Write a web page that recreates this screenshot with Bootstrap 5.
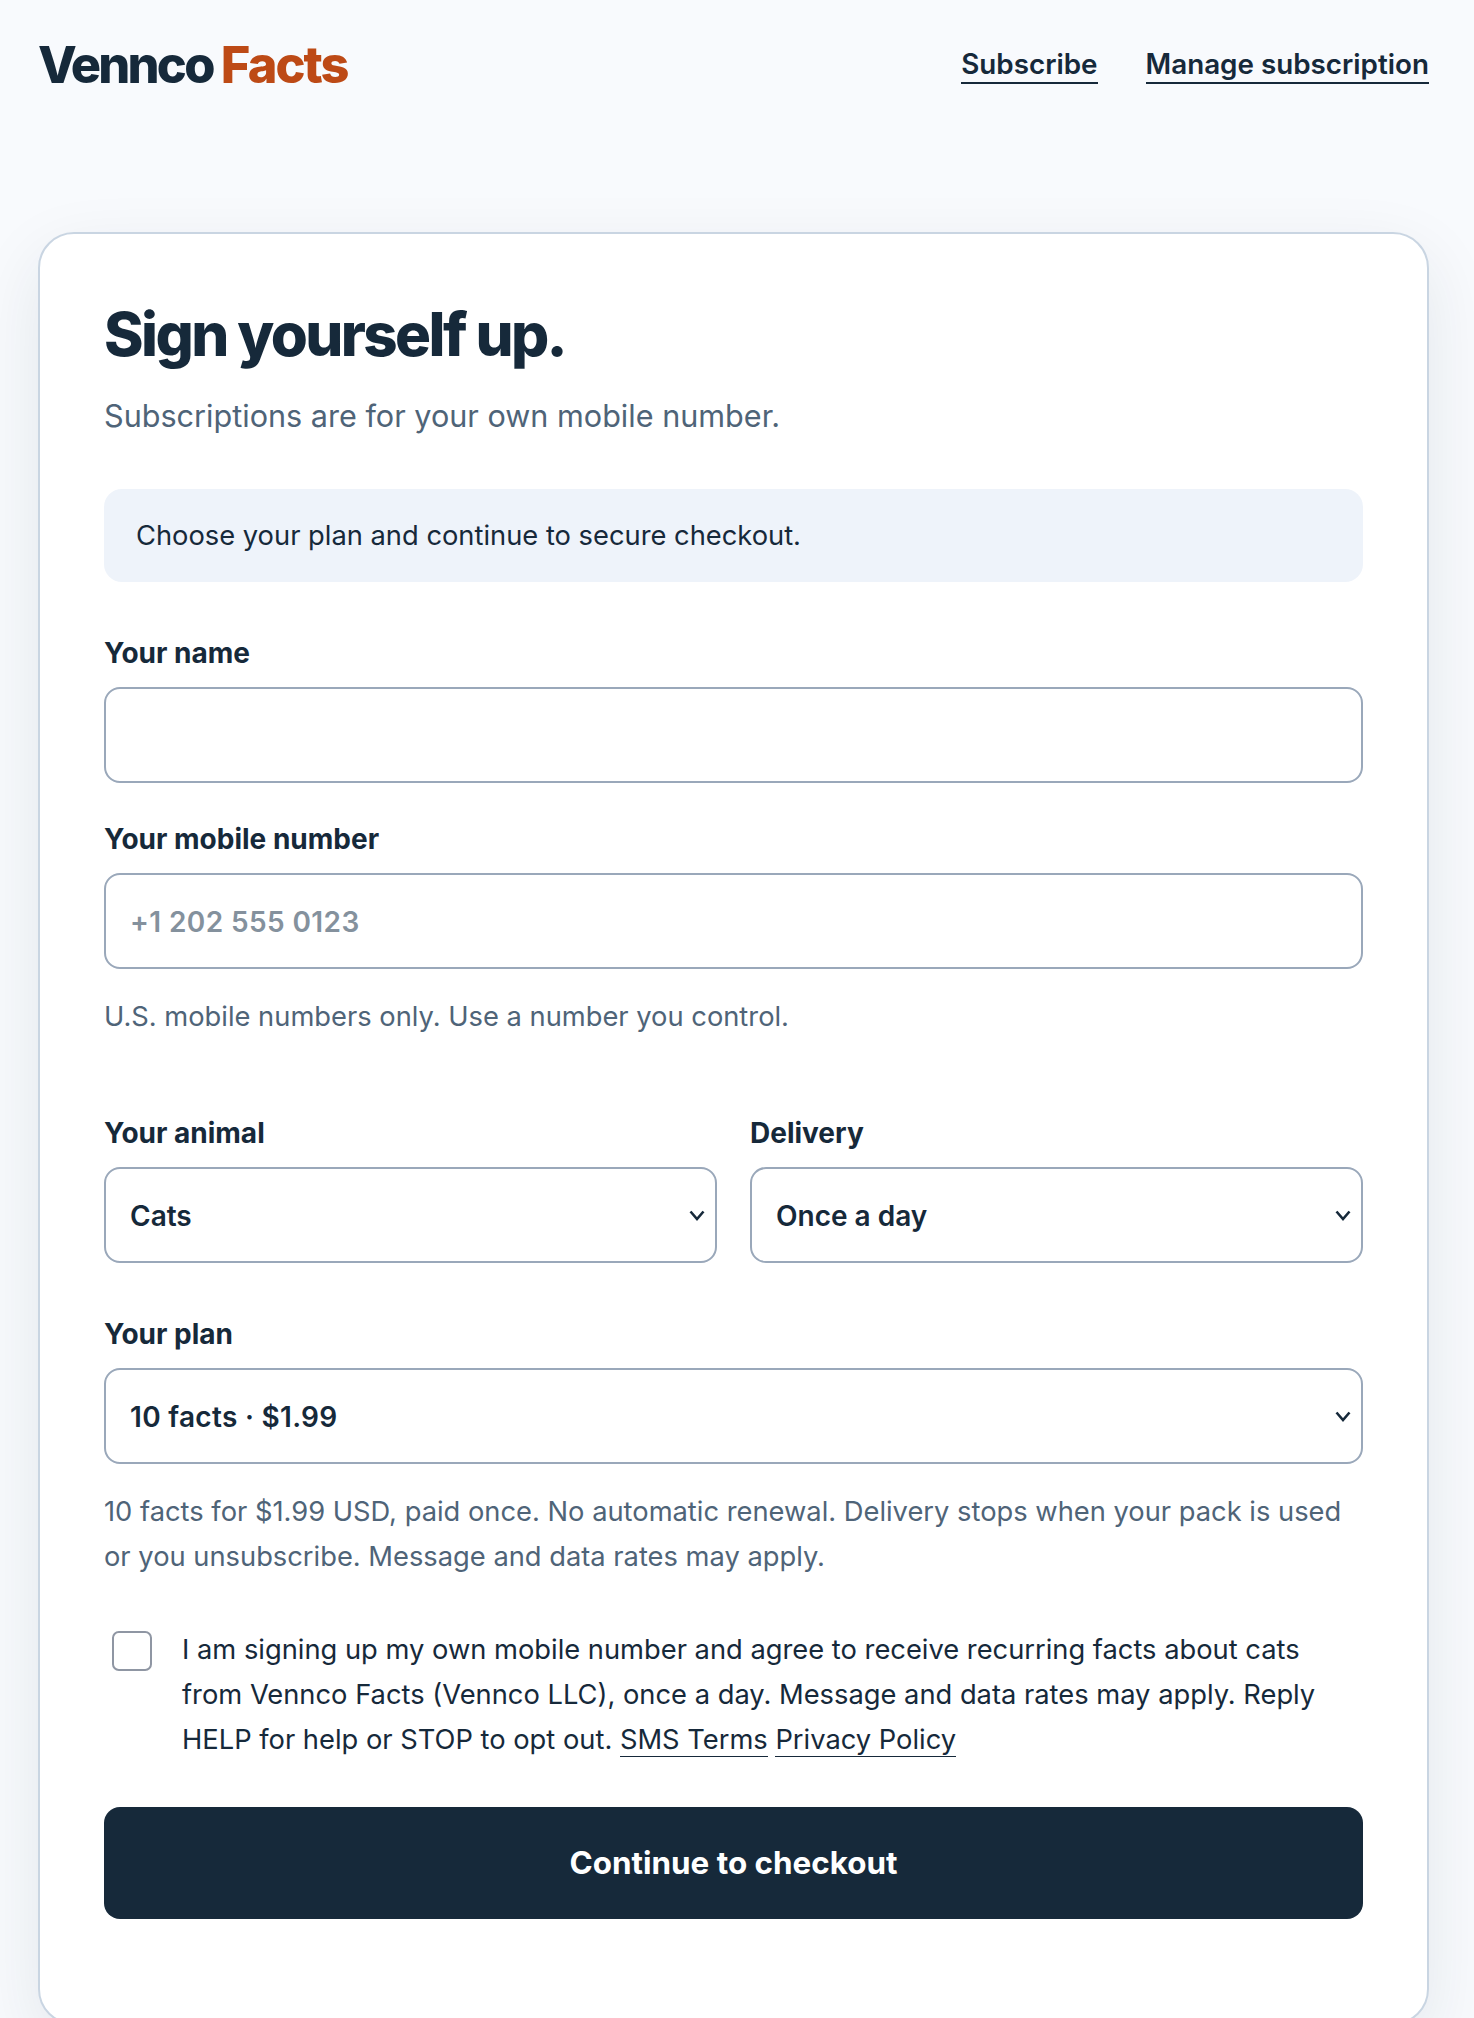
<!doctype html>
<html lang="en">
<head>
<meta charset="utf-8">
<title>Vennco Facts</title>
<link href="https://cdn.jsdelivr.net/npm/bootstrap@5.3.0/dist/css/bootstrap.min.css" rel="stylesheet">
<style>
body{font-family:"Inter","Liberation Sans",sans-serif;color:#16293a;background:#f8fafd;font-size:27.3px}
.page-head{padding:37px 45px 0 38px;height:232px}
.brand-name{font-size:50.5px;font-weight:800;letter-spacing:-2.8px;line-height:56px;color:#16293a;text-decoration:none}
.brand-name span{color:#bd4a16;letter-spacing:-2px}
.top-link{font-size:27.8px;font-weight:600;color:#16293a;text-decoration:none;border-bottom:2px solid #16293a;line-height:35px;display:block}
.head-links{gap:48px;padding-top:10px}
.signup-card{margin:0 45px 0 38px;background:#fff;border:2px solid #c9d5e2;border-radius:36px;padding:65px 64px 104px 64px;box-shadow:0 24px 70px rgba(22,41,58,.09)}
.signup-title{font-size:60px;font-weight:800;letter-spacing:-2.6px;line-height:70px;margin:0 0 27px}
.signup-sub{font-size:30.6px;line-height:40px;color:#4f6478;margin:0 0 53px}
.notice{background:#eef3fa;border-radius:18px;padding:2px 32px 0;height:93px;display:flex;align-items:center;margin-bottom:53px;font-size:27.3px}
.field-label{font-size:28px;font-weight:700;line-height:36px;margin-bottom:16px;display:block}
.field-input,.field-input:focus{height:96px;border:2px solid #9aa8ba;border-radius:16px;font-size:28px;font-weight:600;padding:2px 24px 0;color:#16293a;box-shadow:none}
.field-input::placeholder{color:#84919d;font-weight:600;letter-spacing:.4px}
.plan-select{letter-spacing:.3px}
select.field-input{background-image:url("data:image/svg+xml,%3csvg xmlns='http://www.w3.org/2000/svg' viewBox='0 0 16 11'%3e%3cpath fill='none' stroke='%2316293a' stroke-width='2.6' d='M1.5 1.5 8 9l6.5-7.5'/%3e%3c/svg%3e");background-size:16px 11px;background-position:right 10px center;background-repeat:no-repeat}
.field-help{font-size:27.3px;line-height:45px;color:#4f6478;margin:25px 0 0}
.stack-gap{margin-top:38px}
.stack-gap-wide{margin-top:53px}
.form-row{--bs-gutter-x:33px;margin-top:76px}
.consent{display:flex;gap:30px;padding-left:8px;margin-top:48px;font-size:27.3px;line-height:45px}
.consent input{width:40px;height:40px;margin:4px 0 0;flex:none;border:2px solid #8f96a3;border-radius:4px}
.consent a{color:#16293a;text-decoration:none;border-bottom:1px solid #16293a}
.go-btn,.go-btn:hover{display:block;width:100%;height:112px;margin-top:45px;padding-top:8px;background:#16293a;color:#fff;border:0;border-radius:16px;font-size:31.4px;font-weight:700}
</style>
</head>
<body>
<header class="page-head d-flex justify-content-between align-items-start">
  <a class="brand-name" href="#">Vennco <span>Facts</span></a>
  <nav class="head-links d-flex">
    <a class="top-link" href="#">Subscribe</a>
    <a class="top-link" href="#">Manage subscription</a>
  </nav>
</header>
<main class="signup-card">
  <h1 class="signup-title">Sign yourself up.</h1>
  <p class="signup-sub">Subscriptions are for your own mobile number.</p>
  <div class="notice">Choose your plan and continue to secure checkout.</div>
  <form>
    <label class="field-label" for="n">Your name</label>
    <input id="n" class="form-control field-input" type="text">
    <div class="stack-gap">
      <label class="field-label" for="m">Your mobile number</label>
      <input id="m" class="form-control field-input" type="tel" placeholder="+1 202 555 0123">
      <p class="field-help">U.S. mobile numbers only. Use a number you control.</p>
    </div>
    <div class="row form-row">
      <div class="col-6">
        <label class="field-label" for="a">Your animal</label>
        <select id="a" class="form-select field-input"><option>Cats</option></select>
      </div>
      <div class="col-6">
        <label class="field-label" for="d">Delivery</label>
        <select id="d" class="form-select field-input"><option>Once a day</option></select>
      </div>
    </div>
    <div class="stack-gap-wide">
      <label class="field-label" for="p">Your plan</label>
      <select id="p" class="form-select field-input plan-select"><option>10 facts · $1.99</option></select>
      <p class="field-help">10 facts for $1.99 USD, paid once. No automatic renewal. Delivery stops when your pack is used or you unsubscribe. Message and data rates may apply.</p>
    </div>
    <div class="consent">
      <input class="form-check-input" type="checkbox" id="c">
      <label for="c">I am signing up my own mobile number and agree to receive recurring facts about cats from Vennco Facts (Vennco LLC), once a day. Message and data rates may apply. Reply HELP for help or STOP to opt out. <a href="#">SMS Terms</a> <a href="#">Privacy Policy</a></label>
    </div>
    <button class="btn go-btn" type="button">Continue to checkout</button>
  </form>
</main>
<script src="https://cdn.jsdelivr.net/npm/bootstrap@5.3.0/dist/js/bootstrap.bundle.min.js"></script>
</body>
</html>
